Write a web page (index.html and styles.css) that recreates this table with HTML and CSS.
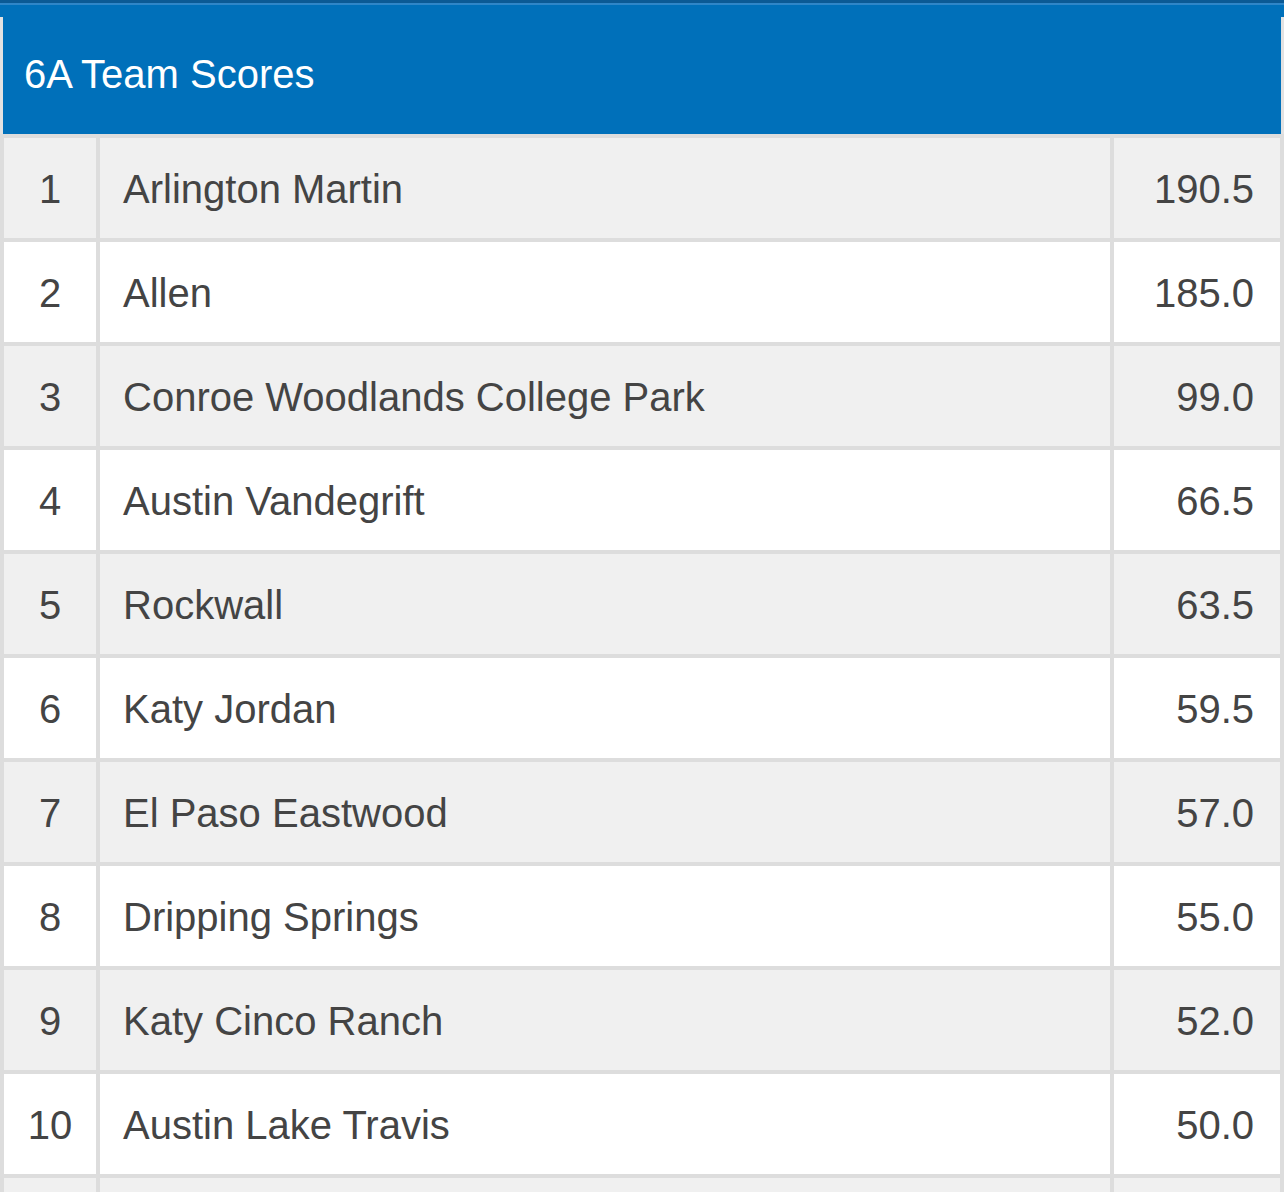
FILE: index.html
```html
<!DOCTYPE html>
<html>
<head>
<meta charset="utf-8">
<link rel="stylesheet" href="styles.css">
</head>
<body>
<div class="card">
  <div class="card-top"></div>
  <div class="card-title">6A Team Scores</div>
  <table class="scores">
    <tbody>
      <tr><td class="rank">1</td><td class="team">Arlington Martin</td><td class="pts">190.5</td></tr>
      <tr><td class="rank">2</td><td class="team">Allen</td><td class="pts">185.0</td></tr>
      <tr><td class="rank">3</td><td class="team">Conroe Woodlands College Park</td><td class="pts">99.0</td></tr>
      <tr><td class="rank">4</td><td class="team">Austin Vandegrift</td><td class="pts">66.5</td></tr>
      <tr><td class="rank">5</td><td class="team">Rockwall</td><td class="pts">63.5</td></tr>
      <tr><td class="rank">6</td><td class="team">Katy Jordan</td><td class="pts">59.5</td></tr>
      <tr><td class="rank">7</td><td class="team">El Paso Eastwood</td><td class="pts">57.0</td></tr>
      <tr><td class="rank">8</td><td class="team">Dripping Springs</td><td class="pts">55.0</td></tr>
      <tr><td class="rank">9</td><td class="team">Katy Cinco Ranch</td><td class="pts">52.0</td></tr>
      <tr><td class="rank">10</td><td class="team">Austin Lake Travis</td><td class="pts">50.0</td></tr>
      <tr><td class="rank"></td><td class="team"></td><td class="pts"></td></tr>
    </tbody>
  </table>
</div>
</body>
</html>
```

FILE: styles.css
```css
html, body {
  margin: 0;
  padding: 0;
  background: #ffffff;
}

body {
  font-family: "Liberation Sans", Arial, Helvetica, sans-serif;
  color: #444444;
}

.card {
  width: 1284px;
  background: #e2e2e2;
}

.card-top {
  height: 14px;
  background: #0070ba;
  border-top: 3px solid #0b5a95;
  box-shadow: inset 0 2px 0 #2f86c8;
}

.card-title {
  margin: 0 3px;
  height: 117px;
  box-sizing: border-box;
  padding-left: 21px;
  padding-bottom: 4px;
  display: flex;
  align-items: center;
  background: #0070ba;
  color: #ffffff;
  font-size: 40px;
  line-height: 1;
}

.scores {
  width: 1284px;
  border-collapse: separate;
  border-spacing: 4px;
  background: #dddddd;
  font-size: 40px;
}

.scores td {
  height: 100px;
  padding: 2px 0 0 0;
  box-sizing: border-box;
  vertical-align: middle;
  line-height: 1;
}

.scores tr:nth-child(odd) td {
  background: #f0f0f0;
}

.scores tr:nth-child(even) td {
  background: #ffffff;
}

.rank {
  width: 92px;
  text-align: center;
}

.team {
  padding-left: 23px !important;
  text-align: left;
}

.pts {
  width: 166px;
  text-align: right;
  padding-right: 26px !important;
}
```
